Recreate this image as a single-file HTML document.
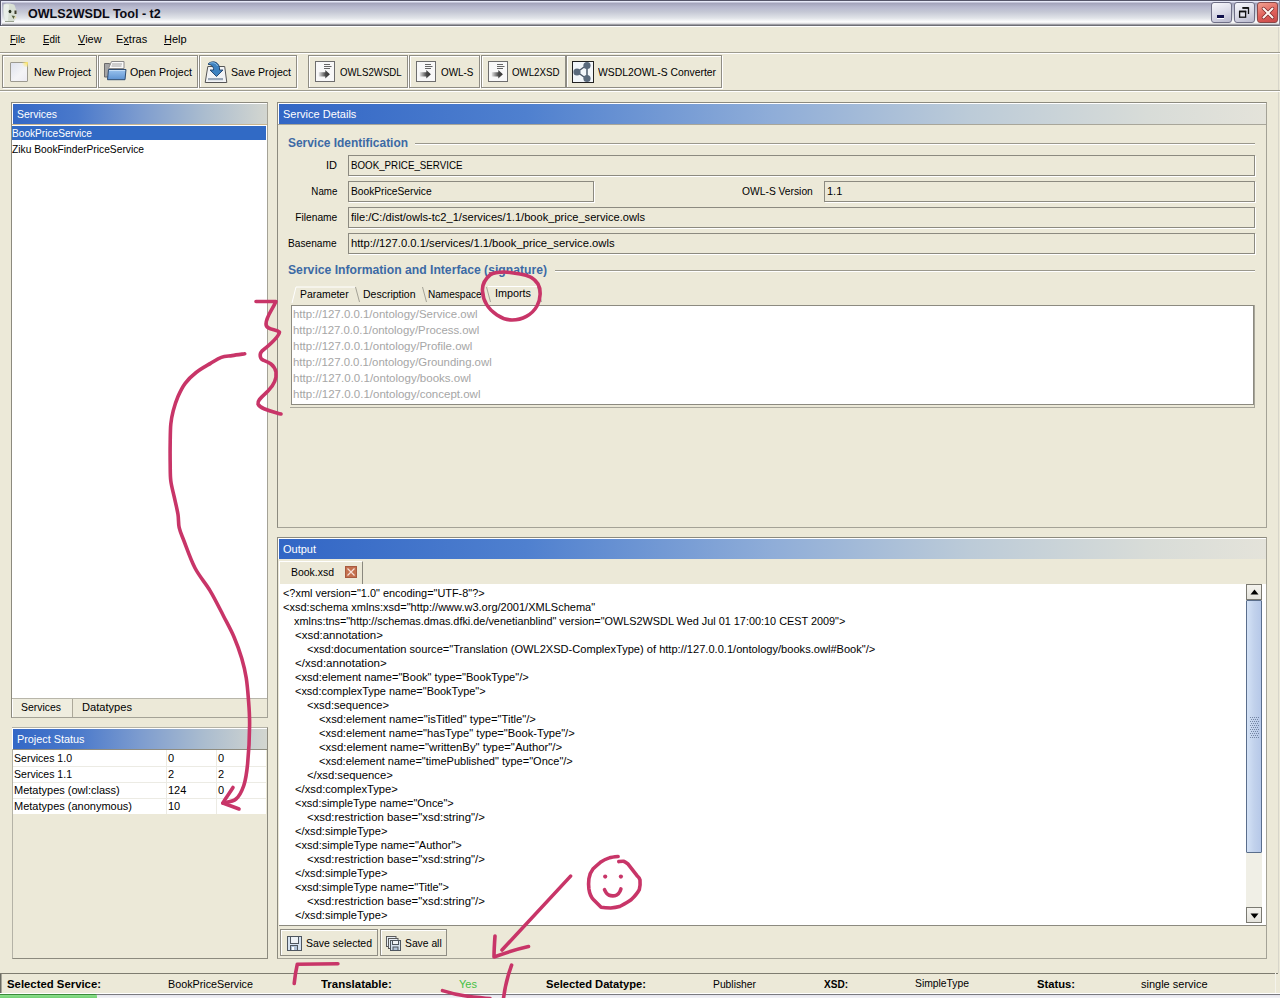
<!DOCTYPE html>
<html><head><meta charset="utf-8">
<style>
*{margin:0;padding:0;box-sizing:border-box}
html,body{width:1280px;height:998px;overflow:hidden;background:#ece9d8;font-family:"Liberation Sans",sans-serif;font-size:11px;color:#000}
.a{position:absolute}
.t{position:absolute;white-space:nowrap;line-height:1}
</style></head><body>
<div class="a" style="left:0px;top:0px;width:1280px;height:26px;background:linear-gradient(#555569 0px,#555569 1px,#e6e8f8 1px,#e6e8f8 2px,#a2a2ba 3px,#b7b8ce 7px,#c5c8d5 12px,#e0e3e8 18px,#ffffff 22px,#d0d0d4 24px,#6e6e76 25px,#6e6e76 26px)"></div>
<div class="a" style="left:0px;top:0px;width:1px;height:26px;background:#555569"></div>
<div class="a" style="left:1279px;top:0px;width:1px;height:26px;background:#8a8a9a"></div>
<div class="a" style="left:1278px;top:26px;width:1px;height:947px;background:#d8d6ca"></div>
<div class="a" style="left:1px;top:1px;width:1px;height:24px;background:#e8e8f4"></div>
<svg class="a" style="left:2px;top:2px" width="16" height="21" viewBox="0 0 16 21"><path d="M1.5 2.5C3 1 10 1 12.5 3L14.5 9C15 13 14 16 12 19.5L3 19.5C1.5 15 1 9 1.5 2.5z" fill="#d8dfd4"/><path d="M2 3C3 2 6 2 7 3L6 19H3C2 14 1.5 9 2 3z" fill="#e9eee8"/><ellipse cx="8" cy="9.5" rx="1.4" ry="1.8" fill="#26301f"/><rect x="12.5" y="8.5" width="2" height="3.5" fill="#3c3a2a"/><path d="M9.5 13.5l3.5 0.5-1.5 3z" fill="#56603e"/><path d="M13 14l1.5 1.5-2 1.5z" fill="#eadca8"/><path d="M3 19.5h9" stroke="#9aa290" stroke-width="1"/></svg>
<div class="t" style="top:7.00px;font-size:13px;left:28px;color:#0b0b14;font-weight:bold;transform:scaleX(0.9660);transform-origin:left top;">OWLS2WSDL Tool - t2</div>
<div class="a" style="left:1211px;top:2px;width:21px;height:21px;border:1px solid #6f6f86;border-radius:3px;background:linear-gradient(160deg,#f7f7fc 0%,#d9d9e6 55%,#b8b8cc 100%)"><div class="a" style="left:5px;top:12px;width:7px;height:3px;background:#10104a;box-shadow:0 1px 0 #fff"></div></div>
<div class="a" style="left:1234px;top:2px;width:21px;height:21px;border:1px solid #6f6f86;border-radius:3px;background:linear-gradient(160deg,#f7f7fc 0%,#d9d9e6 55%,#b8b8cc 100%)"><svg class="a" style="left:0;top:0" width="19" height="19"><path d="M7.5 5h6v6" fill="none" stroke="#111" stroke-width="1.3"/><rect x="7.5" y="4" width="6" height="1.6" fill="#111"/><rect x="4.6" y="8.6" width="6" height="5.6" fill="#e4e4ee" stroke="#111" stroke-width="1.3"/><rect x="4" y="7.6" width="7.2" height="1.6" fill="#111"/></svg></div>
<div class="a" style="left:1257px;top:2px;width:21px;height:21px;border:1px solid #8a4848;border-radius:3px;background:linear-gradient(160deg,#f2a090 0%,#e0605a 55%,#c84848 100%)"><svg class="a" style="left:3px;top:3px" width="14" height="14"><path d="M2.5 2.5L11.5 11.5M11.5 2.5L2.5 11.5" stroke="#7a2a2a" stroke-width="3.4" stroke-linecap="round"/><path d="M2.5 2.5L11.5 11.5M11.5 2.5L2.5 11.5" stroke="#fff4f0" stroke-width="2" stroke-linecap="round"/></svg></div>
<div class="a" style="left:0px;top:26px;width:1280px;height:1px;background:#fff"></div>
<div class="a" style="left:0px;top:52px;width:1280px;height:1px;background:#9d9b8e"></div>
<div class="a" style="left:0px;top:53px;width:1280px;height:1px;background:#fff"></div>
<div class="t" style="top:33.69px;font-size:11px;left:10px;transform:scaleX(0.8632);transform-origin:left top;">File</div>
<div class="a" style="left:10px;top:44px;width:6px;height:1px;background:#000"></div>
<div class="t" style="top:33.69px;font-size:11px;left:43px;transform:scaleX(0.8969);transform-origin:left top;">Edit</div>
<div class="a" style="left:43px;top:44px;width:6px;height:1px;background:#000"></div>
<div class="t" style="top:33.69px;font-size:11px;left:78px;">View</div>
<div class="a" style="left:78px;top:44px;width:7px;height:1px;background:#000"></div>
<div class="t" style="top:33.69px;font-size:11px;left:116px;">Extras</div>
<div class="a" style="left:124px;top:44px;width:5px;height:1px;background:#000"></div>
<div class="t" style="top:33.69px;font-size:11px;left:164px;">Help</div>
<div class="a" style="left:164px;top:44px;width:7px;height:1px;background:#000"></div>
<div class="a" style="left:0px;top:90px;width:1280px;height:1px;background:#9d9b8e"></div>
<div class="a" style="left:0px;top:91px;width:1280px;height:1px;background:#fff"></div>
<div class="a" style="left:2px;top:55px;width:95px;height:33px;border:1px solid #8f8d84;box-shadow:inset 1px 1px 0 #fff,1px 1px 0 #fff"></div>
<div class="t" style="top:66.69px;font-size:11px;left:34px;transform:scaleX(0.9613);transform-origin:left top;">New Project</div>
<div class="a" style="left:98px;top:55px;width:100px;height:33px;border:1px solid #8f8d84;box-shadow:inset 1px 1px 0 #fff,1px 1px 0 #fff"></div>
<div class="t" style="top:66.69px;font-size:11px;left:130px;transform:scaleX(0.9657);transform-origin:left top;">Open Project</div>
<div class="a" style="left:199px;top:55px;width:98px;height:33px;border:1px solid #8f8d84;box-shadow:inset 1px 1px 0 #fff,1px 1px 0 #fff"></div>
<div class="t" style="top:66.69px;font-size:11px;left:231px;transform:scaleX(0.9621);transform-origin:left top;">Save Project</div>
<div class="a" style="left:308px;top:55px;width:100px;height:33px;border:1px solid #8f8d84;box-shadow:inset 1px 1px 0 #fff,1px 1px 0 #fff"></div>
<div class="t" style="top:66.69px;font-size:11px;left:340px;transform:scaleX(0.8778);transform-origin:left top;">OWLS2WSDL</div>
<div class="a" style="left:409px;top:55px;width:71px;height:33px;border:1px solid #8f8d84;box-shadow:inset 1px 1px 0 #fff,1px 1px 0 #fff"></div>
<div class="t" style="top:66.69px;font-size:11px;left:441px;transform:scaleX(0.8986);transform-origin:left top;">OWL-S</div>
<div class="a" style="left:481px;top:55px;width:85px;height:33px;border:1px solid #8f8d84;box-shadow:inset 1px 1px 0 #fff,1px 1px 0 #fff"></div>
<div class="t" style="top:66.69px;font-size:11px;left:512px;transform:scaleX(0.8830);transform-origin:left top;">OWL2XSD</div>
<div class="a" style="left:566px;top:55px;width:156px;height:33px;border:1px solid #8f8d84;box-shadow:inset 1px 1px 0 #fff,1px 1px 0 #fff"></div>
<div class="t" style="top:66.69px;font-size:11px;left:598px;transform:scaleX(0.9417);transform-origin:left top;">WSDL2OWL-S Converter</div>
<div class="a" style="left:10px;top:62px;width:18px;height:20px;border:1px solid #9c9a90;border-radius:1px;background:linear-gradient(135deg,#dfe3ee,#f4f4f6 60%,#ecebf2)"></div>
<div class="a" style="left:22px;top:62px;width:6px;height:5px;background:radial-gradient(circle at 80% 20%,#ffe86a,rgba(255,240,150,0) 80%)"></div>
<svg class="a" style="left:103px;top:60px" width="26" height="22" viewBox="0 0 26 22"><defs><linearGradient id="fb" x1="0" y1="0" x2="0" y2="1"><stop offset="0" stop-color="#9cc4ee"/><stop offset="1" stop-color="#5e93d2"/></linearGradient></defs><path d="M1.5 3.5h5l1 1.5h2v12h-8z" fill="#a4a4a4" stroke="#6a6a6a"/><path d="M8.5 1.5h12.5v7h-15.5z" fill="#fafafa" stroke="#8a8a8a"/><path d="M9 4h10M8.5 6h10" stroke="#8a8a8a" stroke-width="0.8"/><path d="M5.5 9.5h17.5l-1 10.2h-17.5z" fill="url(#fb)" stroke="#2f4d72"/><path d="M6 10.5h16" stroke="#c4ddf6" stroke-width="1"/></svg>
<svg class="a" style="left:203px;top:59px" width="26" height="26" viewBox="0 0 26 26"><path d="M4.8 7.5h16.9l2.1 16h-21.6z" fill="#f2f4f6" stroke="#555"/><rect x="5" y="19" width="15" height="2.2" fill="#9aa8b8"/><path d="M5 5.2C8 1.5 15 1.8 16.5 8.5v2.5h3.5l-6.5 6.5-6.5-6.5h3.5v-1.5C10 7 8 5.5 5 5.2z" fill="#3d82c0" stroke="#1f3f66" stroke-width="0.9"/><path d="M6.5 4.5C9 3 13 3.5 14.5 7" stroke="#8cc0ea" stroke-width="1" fill="none"/></svg>
<svg class="a" style="left:315px;top:61px" width="21" height="22" viewBox="0 0 21 22"><defs><linearGradient id="sh315" x1="0" y1="0" x2="1" y2="0"><stop offset="0" stop-color="#e4e4e4"/><stop offset="0.6" stop-color="#4a4a4a"/><stop offset="1" stop-color="#333"/></linearGradient></defs><rect x="0.5" y="0.5" width="19" height="20" fill="#f8f8f8" stroke="#6e6e6e"/><path d="M9 3.5h6M9 5.5h7.5M9 7.5h6" stroke="#555" stroke-width="0.9"/><path d="M3.7 11.2h6.6v-2.3l4.6 4.4-4.6 4.3v-2h-6.6z" fill="url(#sh315)"/></svg>
<svg class="a" style="left:416px;top:61px" width="21" height="22" viewBox="0 0 21 22"><defs><linearGradient id="sh416" x1="0" y1="0" x2="1" y2="0"><stop offset="0" stop-color="#e4e4e4"/><stop offset="0.6" stop-color="#4a4a4a"/><stop offset="1" stop-color="#333"/></linearGradient></defs><rect x="0.5" y="0.5" width="19" height="20" fill="#f8f8f8" stroke="#6e6e6e"/><path d="M9 3.5h6M9 5.5h7.5M9 7.5h6" stroke="#555" stroke-width="0.9"/><path d="M3.7 11.2h6.6v-2.3l4.6 4.4-4.6 4.3v-2h-6.6z" fill="url(#sh416)"/></svg>
<svg class="a" style="left:488px;top:61px" width="21" height="22" viewBox="0 0 21 22"><defs><linearGradient id="sh488" x1="0" y1="0" x2="1" y2="0"><stop offset="0" stop-color="#e4e4e4"/><stop offset="0.6" stop-color="#4a4a4a"/><stop offset="1" stop-color="#333"/></linearGradient></defs><rect x="0.5" y="0.5" width="19" height="20" fill="#f8f8f8" stroke="#6e6e6e"/><path d="M9 3.5h6M9 5.5h7.5M9 7.5h6" stroke="#555" stroke-width="0.9"/><path d="M3.7 11.2h6.6v-2.3l4.6 4.4-4.6 4.3v-2h-6.6z" fill="url(#sh488)"/></svg>
<svg class="a" style="left:572px;top:61px" width="22" height="22" viewBox="0 0 22 22"><rect x="0.5" y="0.5" width="21" height="21" fill="#f2f6fa" stroke="#222"/><path d="M5 11L15 4M5 11L15 18M15 4L15 18" stroke="#4a5868" stroke-width="1.5"/><circle cx="5" cy="11" r="3.6" fill="#5a6a7c"/><circle cx="15" cy="4.5" r="3.6" fill="#5a6a7c"/><circle cx="15" cy="17.5" r="3.6" fill="#5a6a7c"/></svg>
<div class="a" style="left:11px;top:102px;width:257px;height:616px;border:1px solid #8c8a7e;border-right-color:#a4a296;border-bottom-color:#a4a296"></div>
<div class="a" style="left:12px;top:103px;width:255px;height:1px;background:#fff"></div>
<div class="a" style="left:12px;top:103px;width:1px;height:21px;background:#fff"></div>
<div class="a" style="left:13px;top:104px;width:254px;height:20px;background:linear-gradient(90deg,#3468c6 0%,#4a79cb 25%,#7d9ccf 50%,#aabccf 75%,#d3d6d0 100%)"></div>
<div class="t" style="top:108.69px;font-size:11px;left:17px;color:#fff;transform:scaleX(0.9483);transform-origin:left top;">Services</div>
<div class="a" style="left:12px;top:124px;width:255px;height:1px;background:#c9b690"></div>
<div class="a" style="left:12px;top:125px;width:255px;height:573px;background:#fff"></div>
<div class="a" style="left:12px;top:126px;width:254px;height:14px;background:#316ac5"></div>
<div class="t" style="top:127.69px;font-size:11px;left:12px;color:#fff;transform:scaleX(0.9215);transform-origin:left top;">BookPriceService</div>
<div class="t" style="top:143.69px;font-size:11px;left:12px;transform:scaleX(0.9307);transform-origin:left top;">Ziku BookFinderPriceService</div>
<div class="a" style="left:12px;top:698px;width:255px;height:1px;background:#b8b6aa"></div>
<div class="a" style="left:12px;top:699px;width:61px;height:18px;background:#efeddf;border-left:1px solid #fff;border-right:1px solid #aca899"></div>
<div class="t" style="top:701.69px;font-size:11px;left:21px;transform:scaleX(0.9483);transform-origin:left top;">Services</div>
<div class="t" style="top:701.69px;font-size:11px;left:82px;transform:scaleX(1.0096);transform-origin:left top;">Datatypes</div>
<div class="a" style="left:12px;top:727px;width:256px;height:232px;border:1px solid #b4b2a6;border-right-color:#8c8a7e;border-bottom-color:#8c8a7e"></div>
<div class="a" style="left:12px;top:728px;width:255px;height:1px;background:#fff"></div>
<div class="a" style="left:12px;top:728px;width:1px;height:21px;background:#fff"></div>
<div class="a" style="left:13px;top:729px;width:254px;height:20px;background:linear-gradient(90deg,#3468c6 0%,#4a79cb 25%,#7d9ccf 50%,#aabccf 75%,#d3d6d0 100%)"></div>
<div class="t" style="top:733.69px;font-size:11px;left:17px;color:#fff;transform:scaleX(0.9857);transform-origin:left top;">Project Status</div>
<div class="a" style="left:13px;top:749px;width:254px;height:1px;background:#8e8c80"></div>
<div class="a" style="left:13px;top:750px;width:253px;height:64px;background:#fff"></div>
<div class="a" style="left:13px;top:766px;width:253px;height:1px;background:#ecebe4"></div>
<div class="a" style="left:13px;top:782px;width:253px;height:1px;background:#ecebe4"></div>
<div class="a" style="left:13px;top:798px;width:253px;height:1px;background:#ecebe4"></div>
<div class="a" style="left:166px;top:750px;width:1px;height:64px;background:#ecebe4"></div>
<div class="a" style="left:216px;top:750px;width:1px;height:64px;background:#ecebe4"></div>
<div class="t" style="top:752.69px;font-size:11px;left:14px;transform:scaleX(0.9583);transform-origin:left top;">Services 1.0</div>
<div class="t" style="top:752.69px;font-size:11px;left:168px;">0</div>
<div class="t" style="top:752.69px;font-size:11px;left:218px;">0</div>
<div class="t" style="top:768.69px;font-size:11px;left:14px;transform:scaleX(0.9583);transform-origin:left top;">Services 1.1</div>
<div class="t" style="top:768.69px;font-size:11px;left:168px;">2</div>
<div class="t" style="top:768.69px;font-size:11px;left:218px;">2</div>
<div class="t" style="top:784.69px;font-size:11px;left:14px;">Metatypes (owl:class)</div>
<div class="t" style="top:784.69px;font-size:11px;left:168px;">124</div>
<div class="t" style="top:784.69px;font-size:11px;left:218px;">0</div>
<div class="t" style="top:800.69px;font-size:11px;left:14px;">Metatypes (anonymous)</div>
<div class="t" style="top:800.69px;font-size:11px;left:168px;">10</div>
<div class="t" style="top:800.69px;font-size:11px;left:218px;"></div>
<div class="a" style="left:277px;top:102px;width:990px;height:426px;border:1px solid #8c8a7e;border-right-color:#a4a296;border-bottom-color:#a4a296"></div>
<div class="a" style="left:278px;top:103px;width:988px;height:1px;background:#fff"></div>
<div class="a" style="left:278px;top:103px;width:1px;height:21px;background:#fff"></div>
<div class="a" style="left:279px;top:104px;width:987px;height:20px;background:linear-gradient(90deg,#3266c5 0%,#4f80cf 25%,#8fadd8 50%,#bccbd8 70%,#d8dcd8 88%,#e4e3da 100%)"></div>
<div class="t" style="top:108.69px;font-size:11px;left:283px;color:#fff;">Service Details</div>
<div class="a" style="left:278px;top:124px;width:988px;height:1px;background:#a8a69a"></div>
<div class="t" style="top:136.84px;font-size:12px;left:288px;color:#3c6aa5;font-weight:bold;transform:scaleX(0.9942);transform-origin:left top;">Service Identification</div>
<div class="a" style="left:415px;top:143px;width:840px;height:1px;background:#9a988c"></div>
<div class="a" style="left:415px;top:144px;width:840px;height:1px;background:#fff"></div>
<div class="a" style="left:348px;top:155px;width:907px;height:21px;border:1px solid #8c8a80;box-shadow:1px 1px 0 #fff"></div>
<div class="t" style="top:159.69px;font-size:11px;left:351px;transform:scaleX(0.8868);transform-origin:left top;">BOOK_PRICE_SERVICE</div>
<div class="t" style="top:159.69px;font-size:11px;right:943px;">ID</div>
<div class="a" style="left:348px;top:181px;width:246px;height:21px;border:1px solid #8c8a80;box-shadow:1px 1px 0 #fff"></div>
<div class="t" style="top:185.69px;font-size:11px;left:351px;transform:scaleX(0.9284);transform-origin:left top;">BookPriceService</div>
<div class="t" style="top:185.69px;font-size:11px;right:943px;transform:scaleX(0.8861);transform-origin:right top;">Name</div>
<div class="a" style="left:824px;top:181px;width:431px;height:21px;border:1px solid #8c8a80;box-shadow:1px 1px 0 #fff"></div>
<div class="t" style="top:185.69px;font-size:11px;left:827px;">1.1</div>
<div class="t" style="top:185.69px;font-size:11px;right:467px;transform:scaleX(0.9327);transform-origin:right top;">OWL-S Version</div>
<div class="a" style="left:348px;top:207px;width:907px;height:21px;border:1px solid #8c8a80;box-shadow:1px 1px 0 #fff"></div>
<div class="t" style="top:211.69px;font-size:11px;left:351px;transform:scaleX(1.0082);transform-origin:left top;">file:/C:/dist/owls-tc2_1/services/1.1/book_price_service.owls</div>
<div class="t" style="top:211.69px;font-size:11px;right:943px;transform:scaleX(0.9284);transform-origin:right top;">Filename</div>
<div class="a" style="left:348px;top:233px;width:907px;height:21px;border:1px solid #8c8a80;box-shadow:1px 1px 0 #fff"></div>
<div class="t" style="top:237.69px;font-size:11px;left:351px;transform:scaleX(1.0212);transform-origin:left top;">http://127.0.0.1/services/1.1/book_price_service.owls</div>
<div class="t" style="top:237.69px;font-size:11px;right:943px;transform:scaleX(0.9223);transform-origin:right top;">Basename</div>
<div class="t" style="top:263.84px;font-size:12px;left:288px;color:#3c6aa5;font-weight:bold;transform:scaleX(1.0141);transform-origin:left top;">Service Information and Interface (signature)</div>
<div class="a" style="left:555px;top:270px;width:700px;height:1px;background:#9a988c"></div>
<div class="a" style="left:555px;top:271px;width:700px;height:1px;background:#fff"></div>
<svg class="a" style="left:285px;top:284px" width="260" height="24"><path d="M7 19 L11 3 L70 3" fill="none" stroke="#fff" stroke-width="1"/><path d="M70.5 3 L74.5 18 M137.5 3 L141.5 18 M201.5 3 L205.5 18" stroke="#a4a296" stroke-width="1" fill="none"/><path d="M203 2.5 L252 2.5" stroke="#fff" fill="none"/><path d="M252.5 3 L256.5 18" stroke="#a8a69a" fill="none"/></svg>
<div class="t" style="top:288.69px;font-size:11px;left:300px;transform:scaleX(0.9464);transform-origin:left top;">Parameter</div>
<div class="t" style="top:288.69px;font-size:11px;left:363px;transform:scaleX(0.9542);transform-origin:left top;">Description</div>
<div class="t" style="top:288.69px;font-size:11px;left:428px;transform:scaleX(0.9132);transform-origin:left top;">Namespace</div>
<div class="t" style="top:287.69px;font-size:11px;left:495px;transform:scaleX(0.9816);transform-origin:left top;">Imports</div>
<div class="a" style="left:291px;top:305px;width:963px;height:100px;border:1px solid #8c8a80;background:#fff"></div>
<div class="a" style="left:290px;top:407px;width:965px;height:1px;background:#a8a69a"></div>
<div class="a" style="left:1254px;top:305px;width:1px;height:102px;background:#a8a69a"></div>
<div class="t" style="top:308.69px;font-size:11px;left:293px;color:#a6a6a6;transform:scaleX(1.0404);transform-origin:left top;">http://127.0.0.1/ontology/Service.owl</div>
<div class="t" style="top:324.69px;font-size:11px;left:293px;color:#a6a6a6;transform:scaleX(1.0328);transform-origin:left top;">http://127.0.0.1/ontology/Process.owl</div>
<div class="t" style="top:340.69px;font-size:11px;left:293px;color:#a6a6a6;transform:scaleX(1.0440);transform-origin:left top;">http://127.0.0.1/ontology/Profile.owl</div>
<div class="t" style="top:356.69px;font-size:11px;left:293px;color:#a6a6a6;transform:scaleX(1.0348);transform-origin:left top;">http://127.0.0.1/ontology/Grounding.owl</div>
<div class="t" style="top:372.69px;font-size:11px;left:293px;color:#a6a6a6;transform:scaleX(1.0476);transform-origin:left top;">http://127.0.0.1/ontology/books.owl</div>
<div class="t" style="top:388.69px;font-size:11px;left:293px;color:#a6a6a6;transform:scaleX(1.0464);transform-origin:left top;">http://127.0.0.1/ontology/concept.owl</div>
<div class="a" style="left:277px;top:537px;width:990px;height:422px;border:1px solid #8c8a7e;border-right-color:#a4a296;border-bottom-color:#a4a296"></div>
<div class="a" style="left:278px;top:538px;width:988px;height:1px;background:#fff"></div>
<div class="a" style="left:278px;top:538px;width:1px;height:21px;background:#fff"></div>
<div class="a" style="left:279px;top:539px;width:987px;height:20px;background:linear-gradient(90deg,#3266c5 0%,#4f80cf 25%,#8fadd8 50%,#bccbd8 70%,#d8dcd8 88%,#e4e3da 100%)"></div>
<div class="t" style="top:543.69px;font-size:11px;left:283px;color:#fff;">Output</div>
<div class="a" style="left:279px;top:561px;width:84px;height:23px;border-right:1px solid #8a887e;border-top:1px solid #fff;border-left:1px solid #fff"></div>
<div class="t" style="top:566.69px;font-size:11px;left:291px;transform:scaleX(0.9504);transform-origin:left top;">Book.xsd</div>
<svg class="a" style="left:345px;top:566px" width="12" height="12"><rect x="0.5" y="0.5" width="11" height="11" fill="#c4704e" stroke="#a85a40"/><path d="M2.5 2.5L9.5 9.5M9.5 2.5L2.5 9.5" stroke="#f6e0d8" stroke-width="1.2"/></svg>
<div class="a" style="left:279px;top:584px;width:987px;height:342px;background:#fff;border-bottom:1px solid #8c8a80"></div>
<div class="t" style="top:587.69px;font-size:11px;left:283px;transform:scaleX(0.9915);transform-origin:left top;">&lt;?xml version=&quot;1.0&quot; encoding=&quot;UTF-8&quot;?&gt;</div>
<div class="t" style="top:601.69px;font-size:11px;left:283px;transform:scaleX(1.0014);transform-origin:left top;">&lt;xsd:schema xmlns:xsd=&quot;http://www.w3.org/2001/XMLSchema&quot;</div>
<div class="t" style="top:615.69px;font-size:11px;left:294.2px;transform:scaleX(0.9879);transform-origin:left top;">xmlns:tns=&quot;http://schemas.dmas.dfki.de/venetianblind&quot; version=&quot;OWLS2WSDL Wed Jul 01 17:00:10 CEST 2009&quot;&gt;</div>
<div class="t" style="top:629.69px;font-size:11px;left:295px;transform:scaleX(1.0415);transform-origin:left top;">&lt;xsd:annotation&gt;</div>
<div class="t" style="top:643.69px;font-size:11px;left:307px;transform:scaleX(1.0074);transform-origin:left top;">&lt;xsd:documentation source=&quot;Translation (OWL2XSD-ComplexType) of http://127.0.0.1/ontology/books.owl#Book&quot;/&gt;</div>
<div class="t" style="top:657.69px;font-size:11px;left:295px;transform:scaleX(1.0485);transform-origin:left top;">&lt;/xsd:annotation&gt;</div>
<div class="t" style="top:671.69px;font-size:11px;left:295px;transform:scaleX(1.0069);transform-origin:left top;">&lt;xsd:element name=&quot;Book&quot; type=&quot;BookType&quot;/&gt;</div>
<div class="t" style="top:685.69px;font-size:11px;left:295px;transform:scaleX(0.9950);transform-origin:left top;">&lt;xsd:complexType name=&quot;BookType&quot;&gt;</div>
<div class="t" style="top:699.69px;font-size:11px;left:307px;transform:scaleX(1.0158);transform-origin:left top;">&lt;xsd:sequence&gt;</div>
<div class="t" style="top:713.69px;font-size:11px;left:319px;transform:scaleX(1.0188);transform-origin:left top;">&lt;xsd:element name=&quot;isTitled&quot; type=&quot;Title&quot;/&gt;</div>
<div class="t" style="top:727.69px;font-size:11px;left:319px;transform:scaleX(1.0136);transform-origin:left top;">&lt;xsd:element name=&quot;hasType&quot; type=&quot;Book-Type&quot;/&gt;</div>
<div class="t" style="top:741.69px;font-size:11px;left:319px;transform:scaleX(1.0312);transform-origin:left top;">&lt;xsd:element name=&quot;writtenBy&quot; type=&quot;Author&quot;/&gt;</div>
<div class="t" style="top:755.69px;font-size:11px;left:319px;transform:scaleX(1.0012);transform-origin:left top;">&lt;xsd:element name=&quot;timePublished&quot; type=&quot;Once&quot;/&gt;</div>
<div class="t" style="top:769.69px;font-size:11px;left:307px;transform:scaleX(1.0241);transform-origin:left top;">&lt;/xsd:sequence&gt;</div>
<div class="t" style="top:783.69px;font-size:11px;left:295px;transform:scaleX(1.0200);transform-origin:left top;">&lt;/xsd:complexType&gt;</div>
<div class="t" style="top:797.69px;font-size:11px;left:295px;transform:scaleX(0.9934);transform-origin:left top;">&lt;xsd:simpleType name=&quot;Once&quot;&gt;</div>
<div class="t" style="top:811.69px;font-size:11px;left:307px;transform:scaleX(1.0339);transform-origin:left top;">&lt;xsd:restriction base=&quot;xsd:string&quot;/&gt;</div>
<div class="t" style="top:825.69px;font-size:11px;left:295px;transform:scaleX(1.0075);transform-origin:left top;">&lt;/xsd:simpleType&gt;</div>
<div class="t" style="top:839.69px;font-size:11px;left:295px;transform:scaleX(1.0056);transform-origin:left top;">&lt;xsd:simpleType name=&quot;Author&quot;&gt;</div>
<div class="t" style="top:853.69px;font-size:11px;left:307px;transform:scaleX(1.0339);transform-origin:left top;">&lt;xsd:restriction base=&quot;xsd:string&quot;/&gt;</div>
<div class="t" style="top:867.69px;font-size:11px;left:295px;transform:scaleX(1.0075);transform-origin:left top;">&lt;/xsd:simpleType&gt;</div>
<div class="t" style="top:881.69px;font-size:11px;left:295px;transform:scaleX(1.0004);transform-origin:left top;">&lt;xsd:simpleType name=&quot;Title&quot;&gt;</div>
<div class="t" style="top:895.69px;font-size:11px;left:307px;transform:scaleX(1.0339);transform-origin:left top;">&lt;xsd:restriction base=&quot;xsd:string&quot;/&gt;</div>
<div class="t" style="top:909.69px;font-size:11px;left:295px;transform:scaleX(1.0075);transform-origin:left top;">&lt;/xsd:simpleType&gt;</div>
<div class="a" style="left:1246px;top:584px;width:16px;height:339px;background:#f0efe6"></div>
<div class="a" style="left:1246px;top:584px;width:16px;height:16px;border:1px solid #7b7a72;background:linear-gradient(#f4f3ee,#e4e3dc)"><svg class="a" style="left:3px;top:4px" width="9" height="6"><path d="M0.5 5.5L4.5 0.5L8.5 5.5z" fill="#000"/></svg></div>
<div class="a" style="left:1246px;top:600px;width:16px;height:253px;border:1px solid #5a6e8c;border-radius:1px;background:linear-gradient(90deg,#d4e2f6,#c2d2ec 50%,#b6c8e8)"></div>
<svg class="a" style="left:1250px;top:717px;opacity:0.75" width="9" height="21"><rect x="0" y="0" width="1" height="1" fill="#5a6c8c"/><rect x="2" y="0" width="1" height="1" fill="#5a6c8c"/><rect x="4" y="0" width="1" height="1" fill="#5a6c8c"/><rect x="6" y="0" width="1" height="1" fill="#5a6c8c"/><rect x="8" y="0" width="1" height="1" fill="#5a6c8c"/><rect x="1" y="2" width="1" height="1" fill="#5a6c8c"/><rect x="3" y="2" width="1" height="1" fill="#5a6c8c"/><rect x="5" y="2" width="1" height="1" fill="#5a6c8c"/><rect x="7" y="2" width="1" height="1" fill="#5a6c8c"/><rect x="0" y="4" width="1" height="1" fill="#5a6c8c"/><rect x="2" y="4" width="1" height="1" fill="#5a6c8c"/><rect x="4" y="4" width="1" height="1" fill="#5a6c8c"/><rect x="6" y="4" width="1" height="1" fill="#5a6c8c"/><rect x="8" y="4" width="1" height="1" fill="#5a6c8c"/><rect x="1" y="6" width="1" height="1" fill="#5a6c8c"/><rect x="3" y="6" width="1" height="1" fill="#5a6c8c"/><rect x="5" y="6" width="1" height="1" fill="#5a6c8c"/><rect x="7" y="6" width="1" height="1" fill="#5a6c8c"/><rect x="0" y="8" width="1" height="1" fill="#5a6c8c"/><rect x="2" y="8" width="1" height="1" fill="#5a6c8c"/><rect x="4" y="8" width="1" height="1" fill="#5a6c8c"/><rect x="6" y="8" width="1" height="1" fill="#5a6c8c"/><rect x="8" y="8" width="1" height="1" fill="#5a6c8c"/><rect x="1" y="10" width="1" height="1" fill="#5a6c8c"/><rect x="3" y="10" width="1" height="1" fill="#5a6c8c"/><rect x="5" y="10" width="1" height="1" fill="#5a6c8c"/><rect x="7" y="10" width="1" height="1" fill="#5a6c8c"/><rect x="0" y="12" width="1" height="1" fill="#5a6c8c"/><rect x="2" y="12" width="1" height="1" fill="#5a6c8c"/><rect x="4" y="12" width="1" height="1" fill="#5a6c8c"/><rect x="6" y="12" width="1" height="1" fill="#5a6c8c"/><rect x="8" y="12" width="1" height="1" fill="#5a6c8c"/><rect x="1" y="14" width="1" height="1" fill="#5a6c8c"/><rect x="3" y="14" width="1" height="1" fill="#5a6c8c"/><rect x="5" y="14" width="1" height="1" fill="#5a6c8c"/><rect x="7" y="14" width="1" height="1" fill="#5a6c8c"/><rect x="0" y="16" width="1" height="1" fill="#5a6c8c"/><rect x="2" y="16" width="1" height="1" fill="#5a6c8c"/><rect x="4" y="16" width="1" height="1" fill="#5a6c8c"/><rect x="6" y="16" width="1" height="1" fill="#5a6c8c"/><rect x="8" y="16" width="1" height="1" fill="#5a6c8c"/><rect x="1" y="18" width="1" height="1" fill="#5a6c8c"/><rect x="3" y="18" width="1" height="1" fill="#5a6c8c"/><rect x="5" y="18" width="1" height="1" fill="#5a6c8c"/><rect x="7" y="18" width="1" height="1" fill="#5a6c8c"/><rect x="0" y="20" width="1" height="1" fill="#5a6c8c"/><rect x="2" y="20" width="1" height="1" fill="#5a6c8c"/><rect x="4" y="20" width="1" height="1" fill="#5a6c8c"/><rect x="6" y="20" width="1" height="1" fill="#5a6c8c"/><rect x="8" y="20" width="1" height="1" fill="#5a6c8c"/></svg>
<div class="a" style="left:1246px;top:907px;width:16px;height:16px;border:1px solid #7b7a72;background:linear-gradient(#f4f3ee,#e4e3dc)"><svg class="a" style="left:3px;top:5px" width="9" height="6"><path d="M0.5 0.5L4.5 5.5L8.5 0.5z" fill="#000"/></svg></div>
<div class="a" style="left:280px;top:929px;width:98px;height:27px;border:1px solid #8f8d84;box-shadow:inset 1px 1px 0 #fff"></div>
<div class="t" style="top:937.69px;font-size:11px;left:306px;transform:scaleX(0.9551);transform-origin:left top;">Save selected</div>
<div class="a" style="left:380px;top:929px;width:67px;height:27px;border:1px solid #8f8d84;box-shadow:inset 1px 1px 0 #fff"></div>
<div class="t" style="top:937.69px;font-size:11px;left:405px;transform:scaleX(0.9378);transform-origin:left top;">Save all</div>
<svg class="a" style="left:287px;top:936px" width="16" height="16"><rect x="0.5" y="0.5" width="14" height="14" fill="#d6e2f0" stroke="#4e5660"/><rect x="3.5" y="0.5" width="8" height="7" fill="#eef2f6" stroke="#4e5660"/><rect x="3.5" y="9.5" width="7" height="5" fill="#b0c2d8" stroke="#4e5660"/><rect x="5" y="11" width="2" height="3" fill="#fff"/></svg>
<svg class="a" style="left:385px;top:935px" width="17" height="17"><rect x="1.5" y="1.5" width="9.5" height="10" fill="#e6edf4" stroke="#5a5a5a"/><rect x="3.5" y="3.5" width="9.5" height="10" fill="#e6edf4" stroke="#5a5a5a"/><rect x="5.5" y="5.5" width="10" height="10" fill="#d6e2f0" stroke="#4e5660"/><rect x="7.5" y="5.5" width="6" height="4" fill="#eef2f6" stroke="#4e5660"/><rect x="8" y="12" width="5" height="3.5" fill="#b0c2d8" stroke="#4e5660"/></svg>
<div class="a" style="left:0px;top:973px;width:1278px;height:1px;background:#7e7c70"></div>
<div class="a" style="left:0px;top:974px;width:1px;height:19px;background:#6a6a62"></div>
<div class="a" style="left:1px;top:974px;width:1px;height:19px;background:#a8a69a"></div>
<div class="t" style="top:978.69px;font-size:11px;left:7px;font-weight:bold;transform:scaleX(1.0317);transform-origin:left top;">Selected Service:</div>
<div class="t" style="top:978.69px;font-size:11px;left:168px;transform:scaleX(0.9791);transform-origin:left top;">BookPriceService</div>
<div class="t" style="top:978.69px;font-size:11px;left:321px;font-weight:bold;transform:scaleX(1.0419);transform-origin:left top;">Translatable:</div>
<div class="t" style="top:978.69px;font-size:11px;left:459px;color:#44c044;">Yes</div>
<div class="t" style="top:978.69px;font-size:11px;left:546px;font-weight:bold;transform:scaleX(1.0160);transform-origin:left top;">Selected Datatype:</div>
<div class="t" style="top:978.69px;font-size:11px;left:713px;transform:scaleX(0.9377);transform-origin:left top;">Publisher</div>
<div class="t" style="top:978.69px;font-size:11px;left:824px;font-weight:bold;transform:scaleX(0.9132);transform-origin:left top;">XSD:</div>
<div class="t" style="top:977.69px;font-size:11px;left:915px;transform:scaleX(0.9396);transform-origin:left top;">SimpleType</div>
<div class="t" style="top:978.69px;font-size:11px;left:1037px;font-weight:bold;transform:scaleX(1.0193);transform-origin:left top;">Status:</div>
<div class="t" style="top:978.69px;font-size:11px;left:1141px;">single service</div>
<div class="a" style="left:1275px;top:973px;width:1px;height:20px;background:#f4f3ec"></div>
<div class="a" style="left:0px;top:993px;width:1280px;height:1px;background:#fff"></div>
<div class="a" style="left:0px;top:994px;width:1280px;height:4px;background:linear-gradient(#7a7a80 0 1px,#e4e4ec 1px,#f4f4f8 100%)"></div>
<div class="a" style="left:0px;top:994px;width:97px;height:4px;background:linear-gradient(#3a8a3a 0 1px,#8ce08c 1px,#74d074 100%);border-radius:0 2px 0 0"></div>
<svg class="a" style="left:0;top:0" width="1280" height="998" viewBox="0 0 1280 998"><g fill="none" stroke="#c83568" stroke-width="3.6" stroke-linecap="round" stroke-linejoin="round">
<path d="M491 274 C485 279 482 285 482.5 291 C483 300 488 309 497 315 C503 319 508 320 512 320 C522 320 532 315 537 306 C541 299 541 289 538 284 C535 279 528 275 520 274 C514 273 508 272 504 272 C498 272 493 273 490 275"/>
<path d="M256 301.5 L276 301.5 C272 310 266 317 266 324 C266 330 276 329 279.5 332 C279 336 272 343 262 351 C259 354 260 359 263 360 C268 362 274 364 276 372 C277 380 273 386 268 391 C263 396 257 400 258 404 C260 409 270 411 281 414"/>
<path d="M244.7 353.8 C242.6 354.1 236.0 355.0 232.1 355.6 C228.2 356.2 224.9 356.1 221.3 357.4 C217.7 358.7 214.7 360.9 210.5 363.4 C206.3 365.9 200.3 369.2 196.1 372.5 C191.9 375.8 188.2 379.3 185.2 383.3 C182.2 387.3 180.0 391.9 178.0 396.5 C176.0 401.1 174.4 406.3 173.2 410.9 C172.0 415.5 171.3 418.9 170.8 424.1 C170.3 429.3 170.3 435.6 170.2 442.2 C170.1 448.8 170.1 457.6 170.2 464.0 C170.3 470.4 170.1 475.3 170.8 480.9 C171.5 486.5 173.2 492.1 174.4 497.7 C175.6 503.3 177.2 509.5 178.0 514.5 C178.8 519.5 178.2 523.3 179.2 527.7 C180.2 532.1 181.4 534.3 184.0 541.0 C186.6 547.7 190.7 559.7 195.0 568.0 C199.3 576.3 205.2 582.6 210.0 590.6 C214.8 598.6 219.6 608.4 223.6 616.2 C227.6 624.0 231.1 630.2 234.1 637.2 C237.1 644.2 239.7 651.5 241.7 658.3 C243.7 665.1 245.1 671.0 246.2 677.8 C247.3 684.6 247.8 691.0 248.4 698.9 C249.0 706.8 249.7 714.1 249.6 725.0 C249.5 735.9 248.6 753.9 247.6 764.0 C246.6 774.1 245.7 779.7 243.8 785.5 C241.8 791.3 239.5 796.1 236.0 799.0 C232.5 801.9 225.0 802.4 222.8 803.1"/>
<path d="M233 787.5 C229 794 225 799 223 803 C228 805 234 807 239 809"/>
<path d="M570.6 876.1 L502 950"/>
<path d="M495 936 C494.5 943 494 950 494 957 C505 953 517 949 528.5 946.5"/>
<path d="M618.1 856.5 C614 856.8 611 857.2 609.3 857.9 C606 859 603 860.5 600.4 862.3 C597 865 595 867 592.9 869.1 C590.5 872 589.5 875 588.9 878.7 C588.5 882 588.5 885.5 588.9 888.9 C589.5 893 591 897 593.6 899.8 L601.1 907.3 C604 907.8 607 908 610.7 908 C614 907.8 617 907.3 619.5 906.6 C623.5 904.5 627.5 902.5 631.1 899.8 C634.5 896.5 637.5 893 639.3 889.6 C640.2 886 640.3 883 640 880 C639.5 878 638.5 877 637.2 875.9 L627.7 863.7 C626 862.5 625 861.8 623.6 861.3 C622 861.2 620.5 861.4 618.8 861.6"/>
<path d="M604.5 889.6 C605.5 892 607 894.2 608.6 895 C610.5 895.8 612.5 896 614.7 895.7 C617.5 895 620 892 620.9 888.9"/>
<path d="M294.2 983.5 C295 976 296 970 297.3 964.2 L337.9 963.8"/>
<path d="M442.5 990.6 C450 993 458 995 466 996 C474 997 482 998 490 998.5"/>
<path d="M511.6 965.2 C508 975 505 986 503.4 999"/>
</g><g fill="#c83568"><circle cx="605.2" cy="876.6" r="2.1"/><circle cx="620.9" cy="876.6" r="2.1"/></g></svg>
</body></html>
